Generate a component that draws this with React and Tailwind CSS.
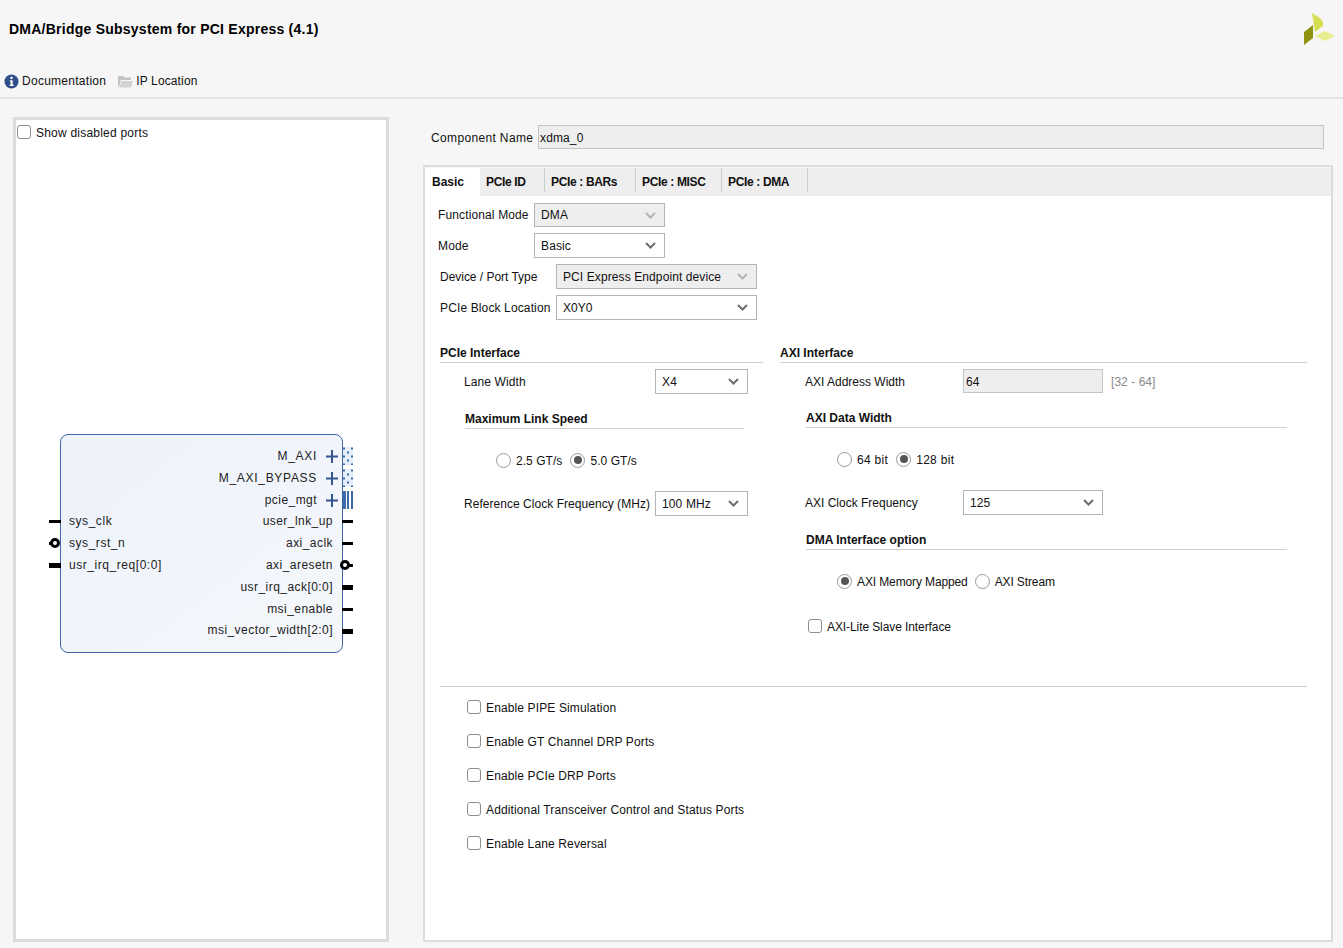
import React from "react";

const rows = [
  { right: "M_AXI", plus: true, pin: "dots", wide: true },
  { right: "M_AXI_BYPASS", plus: true, pin: "dots", wide: true },
  { right: "pcie_mgt", plus: true, pin: "bars" },
  { left: "sys_clk", leftPin: "thin", right: "user_lnk_up", pin: "thin" },
  { left: "sys_rst_n", leftPin: "ring", right: "axi_aclk", pin: "thin" },
  { left: "usr_irq_req[0:0]", leftPin: "thick", right: "axi_aresetn", pin: "ring" },
  { right: "usr_irq_ack[0:0]", pin: "thick" },
  { right: "msi_enable", pin: "thin" },
  { right: "msi_vector_width[2:0]", pin: "thick" },
];

function Chevron({ off }) {
  return (
    <svg width="11" height="7" viewBox="0 0 11 7" className="shrink-0">
      <path d="M1 1l4.5 4.5L10 1" fill="none" stroke={off ? "#b4b4b4" : "#6e6e6e"} strokeWidth="2" />
    </svg>
  );
}

function Select({ value, off, className }) {
  return (
    <div
      className={`flex items-center justify-between border border-[#b4b4b4] pl-[6px] pr-[8px] ${off ? "bg-[#eeeeee]" : "bg-white"} ${className}`}
    >
      <span>{value}</span>
      <Chevron off={off} />
    </div>
  );
}

function Check({ label, className = "" }) {
  return (
    <div className={`flex h-[14px] items-center gap-[5px] ${className}`}>
      <span className="h-[14px] w-[14px] rounded-[3px] border-[1.5px] border-[#8f8f8f] bg-white" />
      <span className="pt-[1px]">{label}</span>
    </div>
  );
}

function Radio({ label, on }) {
  return (
    <div className="flex h-[16px] items-center gap-[5px]">
      <span className="flex h-[15px] w-[15px] items-center justify-center rounded-full border-[1.5px] border-[#9a9a9a] bg-white">
        {on && <span className="h-[8px] w-[8px] rounded-full bg-[#555555]" />}
      </span>
      <span className="pt-[1px]">{label}</span>
    </div>
  );
}

function Title({ children, className = "" }) {
  return <div className={`border-b border-[#cfcfcf] font-bold tracking-[0px] ${className}`}>{children}</div>;
}

function RightPin({ type }) {
  if (type === "dots") {
    const dots = [];
    for (let y = 0; y < 5; y++) {
      const xs = y % 2 ? [4] : [0, 8];
      xs.forEach((x) => dots.push(<rect key={`${x}-${y}`} x={x} y={y * 4 + 0.5} width="2" height="2" fill="#3f70ad" />));
    }
    return (
      <svg width="10" height="18" viewBox="0 0 10 18" className="absolute right-[-11px] top-[3px] bg-[#e6eff9]">
        {dots}
      </svg>
    );
  }
  if (type === "bars") {
    return (
      <div className="absolute right-[-11px] top-[3px] flex h-[18px] w-[10px] justify-between">
        <span className="w-[2.5px] bg-[#3a6aa8]" />
        <span className="w-[2.5px] bg-[#3a6aa8]" />
        <span className="w-[2.5px] bg-[#3a6aa8]" />
      </div>
    );
  }
  if (type === "thin") return <span className="absolute right-[-11px] top-[10px] h-[3px] w-[11px] bg-black" />;
  if (type === "thick") return <span className="absolute right-[-11px] top-[9px] h-[5px] w-[11px] bg-black" />;
  return (
    <>
      <span className="absolute right-[-11px] top-[10px] h-[3px] w-[11px] bg-black" />
      <span className="absolute right-[-8px] top-[6px] h-[10px] w-[10px] rounded-full border-[3px] border-black bg-white" />
    </>
  );
}

function LeftPin({ type }) {
  if (type === "thin") return <span className="absolute left-[-12px] top-[10px] h-[3px] w-[12px] bg-black" />;
  if (type === "thick") return <span className="absolute left-[-12px] top-[9px] h-[5px] w-[12px] bg-black" />;
  return (
    <>
      <span className="absolute left-[-12px] top-[10px] h-[3px] w-[8px] bg-black" />
      <span className="absolute left-[-11px] top-[6px] h-[10px] w-[10px] rounded-full border-[3px] border-black bg-white" />
    </>
  );
}

function Block() {
  return (
    <div className="ml-[44px] mt-[295px] h-[219px] w-[283px] rounded-[8px] border border-[#3f65a8] bg-gradient-to-br from-[#edf2fb] to-[#f5f7fb] pt-[9.4px] tracking-[0.45px] text-[#222222]">
      {rows.map((r) => (
        <div key={r.right} className="relative flex h-[21.9px] items-center justify-between">
          {r.leftPin && <LeftPin type={r.leftPin} />}
          <span className="pl-[8px] tracking-[0.55px]">{r.left}</span>
          <div className="flex items-center pr-[9px]">
            <span className={`${r.plus ? "pt-[1px]" : ""} ${r.wide ? "tracking-[0.7px]" : ""}`}>{r.right}</span>
            {r.plus && (
              <svg width="12" height="13" viewBox="0 0 12 13" className="ml-[9px] mr-[-5px] mt-[2px]">
                <path d="M6 0v13M0 6.5h12" stroke="#34558f" strokeWidth="2" />
              </svg>
            )}
          </div>
          {r.pin && <RightPin type={r.pin} />}
        </div>
      ))}
    </div>
  );
}

export default function App() {
  return (
    <div className="h-[948px] w-[1343px] overflow-hidden bg-[#f6f6f6] font-['Liberation_Sans',Arial,sans-serif] text-[12px] tracking-[0.13px] text-[#111111]">
      <header className="relative h-[99px] border-b-2 border-[#e4e4e4] pl-[9px] pt-[20px]">
        <h1 className="text-[14px] font-bold leading-[18px] tracking-[0.24px] text-black">
          DMA/Bridge Subsystem for PCI Express (4.1)
        </h1>
        <svg width="33" height="33" viewBox="0 0 33 33" className="absolute right-[7px] top-[12px]">
          <polygon points="9,1 17,6 20,10 20,14 12,20" fill="#d6de55" />
          <polygon points="12,24 22,19 32,24 22,29" fill="#e8ee8f" />
          <polygon points="1,20 10,13 10,26 1,33" fill="#8f9410" />
        </svg>
        <div className="absolute left-[4px] top-[72px] flex items-center">
          <svg width="15" height="15" viewBox="0 0 15 15">
            <circle cx="7.5" cy="7.5" r="7" fill="#2f4f8c" />
            <rect x="6.4" y="2.8" width="2.2" height="2.2" fill="#fff" />
            <path d="M5.8 6.2h2.9v4.6h1v1.2H5.6v-1.2h1v-3.4h-.8z" fill="#fff" />
          </svg>
          <span className="ml-[3px] tracking-[0.27px]">Documentation</span>
          <svg width="15" height="13" viewBox="0 0 15 13" className="ml-[12px]">
            <path d="M0 1h5l1.5 1.5H13V5H3L1 12H0z" fill="#c4c4c4" />
            <path d="M3.5 6H15l-2 6.5H1.5z" fill="#d2d2d2" />
          </svg>
          <span className="ml-[3px]">IP Location</span>
        </div>
      </header>

      <main className="flex pl-[13px] pt-[18px]">
        <section className="h-[825px] w-[376px] border-[3px] border-[#dcdcdc] bg-white">
          <Check label="Show disabled ports" className="ml-[1px] mt-[5px] tracking-[0.22px]" />
          <Block />
        </section>

        <section className="ml-[34px] w-[910px]">
          <div className="mt-[8px] flex h-[24px] items-center pl-[8px]">
            <span className="w-[107px] pt-[1px] tracking-[0.35px]">Component Name</span>
            <div className="flex h-[24px] w-[786px] items-center border border-[#c4c4c4] bg-[#eeeeee] pl-[1px] pt-[1px]">xdma_0</div>
          </div>

          <div className="mt-[16px] h-[777px] border-2 border-[#dcdcdc] bg-white">
            <div className="flex h-[29px] border-t border-[#f6f6f6] bg-[#eeeeee] font-bold tracking-[-0.35px]">
              <div className="flex w-[55px] items-center bg-white pl-[7px] tracking-[0px]">Basic</div>
              <div className="flex h-[24px] w-[65px] items-center border-r border-[#cccccc] pl-[6px] pt-[4px]">PCIe ID</div>
              <div className="flex h-[24px] w-[91px] items-center border-r border-[#cccccc] pl-[6px] pt-[4px]">PCIe : BARs</div>
              <div className="flex h-[24px] w-[86px] items-center border-r border-[#cccccc] pl-[6px] pt-[4px]">PCIe : MISC</div>
              <div className="flex h-[24px] w-[86px] items-center border-r border-[#cccccc] pl-[6px] pt-[4px]">PCIe : DMA</div>
            </div>

            <div className="mt-[7px] flex h-[24px] items-center pl-[13px]">
              <span className="w-[96px]">Functional Mode</span>
              <Select value="DMA" off className="h-[24px] w-[131px]" />
            </div>
            <div className="mt-[6px] flex h-[25px] items-center pl-[13px]">
              <span className="w-[96px]">Mode</span>
              <Select value="Basic" className="h-[25px] w-[131px]" />
            </div>
            <div className="mt-[6px] flex h-[25px] items-center pl-[15px]">
              <span className="w-[116px] tracking-[-0.03px]">Device / Port Type</span>
              <Select value="PCI Express Endpoint device" off className="h-[25px] w-[201px] tracking-[0.1px]" />
            </div>
            <div className="mt-[6px] flex h-[25px] items-center pl-[15px]">
              <span className="w-[116px]">PCIe Block Location</span>
              <Select value="X0Y0" className="h-[25px] w-[201px] tracking-[0px]" />
            </div>

            <div className="mt-[26px] flex pl-[15px]">
              <div className="w-[323px]">
                <Title className="h-[17px] leading-[14px]">PCIe Interface</Title>
                <div className="mt-[6px] flex h-[25px] items-center pl-[24px]">
                  <span className="w-[191px] tracking-[0.1px]">Lane Width</span>
                  <Select value="X4" className="h-[25px] w-[93px]" />
                </div>
                <Title className="ml-[25px] mt-[17px] h-[18px] w-[279px] leading-[16px]">Maximum Link Speed</Title>
                <div className="mt-[23px] flex gap-[8px] pl-[56px] tracking-[0.05px]">
                  <Radio label="2.5 GT/s" />
                  <Radio label="5.0 GT/s" on />
                </div>
                <div className="mt-[23px] flex h-[25px] items-center pl-[24px]">
                  <span className="w-[191px] whitespace-nowrap tracking-[0.04px]">Reference Clock Frequency (MHz)</span>
                  <Select value="100 MHz" className="h-[25px] w-[93px]" />
                </div>
              </div>

              <div className="ml-[17px] w-[527px]">
                <Title className="h-[17px] leading-[14px]">AXI Interface</Title>
                <div className="mt-[6px] flex h-[24px] items-center pl-[25px]">
                  <span className="w-[158px] pt-[1px] tracking-[0px]">AXI Address Width</span>
                  <div className="flex h-[24px] w-[140px] items-center border border-[#c4c4c4] bg-[#eeeeee] pl-[2px] pt-[1px]">64</div>
                  <span className="ml-[8px] pt-[1px] tracking-[0.05px] text-[#8a8a8a]">[32 - 64]</span>
                </div>
                <Title className="ml-[26px] mt-[17px] h-[18px] w-[481px] leading-[16px]">AXI Data Width</Title>
                <div className="mt-[23px] flex gap-[8px] pl-[57px] tracking-[0.3px]">
                  <Radio label="64 bit" />
                  <Radio label="128 bit" on />
                </div>
                <div className="mt-[23px] flex h-[25px] items-center pl-[25px]">
                  <span className="w-[158px] tracking-[0px]">AXI Clock Frequency</span>
                  <Select value="125" className="h-[25px] w-[140px]" />
                </div>
                <Title className="ml-[26px] mt-[17px] h-[18px] w-[481px] leading-[16px]">DMA Interface option</Title>
                <div className="mt-[23px] flex gap-[7px] pl-[57px] tracking-[-0.12px]">
                  <Radio label="AXI Memory Mapped" on />
                  <Radio label="AXI Stream" />
                </div>
                <Check label="AXI-Lite Slave Interface" className="ml-[28px] mt-[30px] tracking-[-0.09px]" />
              </div>
            </div>

            <div className="ml-[15px] mt-[53px] w-[867px] border-t border-[#cfcfcf]" />

            <div className="mt-[13px] flex flex-col gap-[20px] pl-[42px]">
              <Check label="Enable PIPE Simulation" />
              <Check label="Enable GT Channel DRP Ports" />
              <Check label="Enable PCIe DRP Ports" />
              <Check label="Additional Transceiver Control and Status Ports" />
              <Check label="Enable Lane Reversal" />
            </div>
          </div>
        </section>
      </main>
    </div>
  );
}
